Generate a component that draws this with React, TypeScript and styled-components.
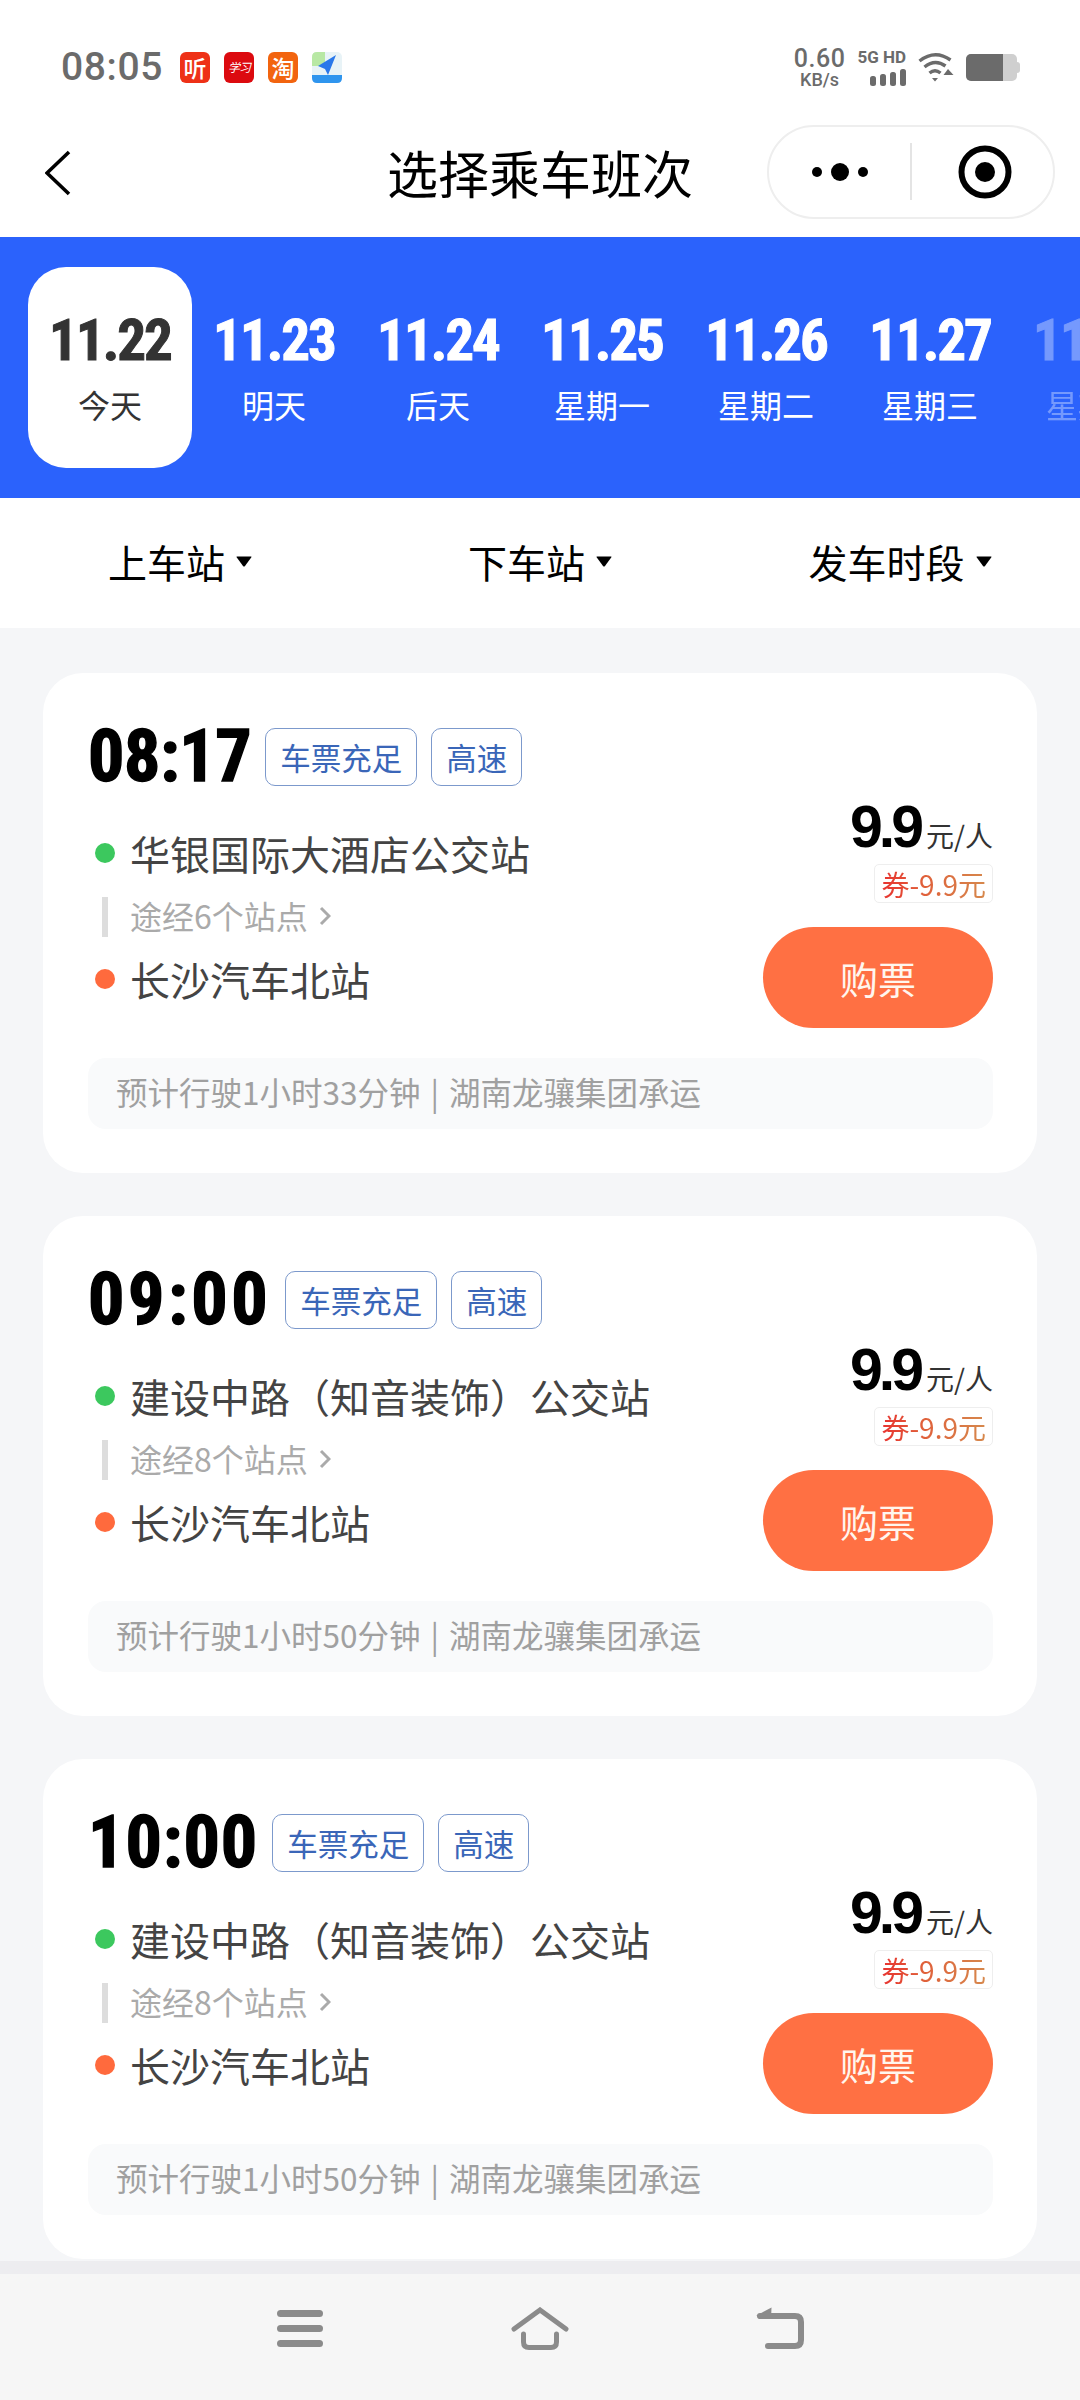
import React from 'react'
import styled, {createGlobalStyle} from 'styled-components'

const CJK='"Noto Sans CJK SC","Noto Sans",sans-serif'
const DIGITS='"Liberation Sans Narrow","Roboto Condensed",Roboto,sans-serif'

const GlobalStyle=createGlobalStyle`
html,body{
    margin:0;
    padding:0;
    background:#fff;
}
*{box-sizing:border-box;}
`

interface ITrip{
    time:string;
    spacing:number;
    from:string;
    via:number;
    duration:string;
}

// the digits of the reference are proportional, spacing makes up for it per time
const trips:ITrip[]=[
    {time:'08:17',spacing:-0.4,from:'华银国际大酒店公交站',via:6,duration:'1小时33分钟'},
    {time:'09:00',spacing:3.6,from:'建设中路（知音装饰）公交站',via:8,duration:'1小时50分钟'},
    {time:'10:00',spacing:1,from:'建设中路（知音装饰）公交站',via:8,duration:'1小时50分钟'},
]

const dates=[
    {day:'11.22',label:'今天'},
    {day:'11.23',label:'明天'},
    {day:'11.24',label:'后天'},
    {day:'11.25',label:'星期一'},
    {day:'11.26',label:'星期二'},
    {day:'11.27',label:'星期三'},
    {day:'11.28',label:'星期四'},
]

const Filter:React.FC<{label:string}>=({label})=>(
    <FilterItem>
        {label}
        <svg width="16" height="11" viewBox="0 0 16 11"><path d="M1 0.5H15Q16 0.5 15.2 1.6L9 10Q8 11 7 10L0.8 1.6Q0 0.5 1 0.5Z" fill="#000"/></svg>
    </FilterItem>
)

const TripCard:React.FC<{trip:ITrip}>=({trip})=>(
    <Card>
        <CardMain>
            <div>
                <CardHead>
                    <DepartTime $spacing={trip.spacing}>{trip.time}</DepartTime>
                    <Tag>车票充足</Tag>
                    <Tag>高速</Tag>
                </CardHead>
                <Stop>
                    <Dot $color="#3cc85e"/>
                    {trip.from}
                </Stop>
                <Via>
                    <ViaBar/>
                    <ViaText>途经{trip.via}个站点</ViaText>
                    <svg width="12" height="20" viewBox="0 0 12 20"><path d="M2 2L10 10L2 18" fill="none" stroke="#aaa" strokeWidth="3"/></svg>
                </Via>
                <Stop>
                    <Dot $color="#ff6a3d"/>
                    长沙汽车北站
                </Stop>
            </div>
            <PriceColumn>
                <PriceLine><Price>9.9</Price><PriceUnit>元/人</PriceUnit></PriceLine>
                <Coupon><CouponText>券-9.9元</CouponText></Coupon>
                <BuyButton>购票</BuyButton>
            </PriceColumn>
        </CardMain>
        <CardFooter>预计行驶{trip.duration} | 湖南龙骧集团承运</CardFooter>
    </Card>
)

export default function App():React.ReactElement{
    return (
        <Page>
            <GlobalStyle/>
            <StatusBar>
                <StatusLeft>
                    <Clock>08:05</Clock>
                    <AppIcon $bg="#ee3117">听</AppIcon>
                    <AppIcon $bg="#dc0a0f" $small>学习</AppIcon>
                    <AppIcon $bg="#f2640f">淘</AppIcon>
                    <svg width="30" height="31" viewBox="0 0 30 31">
                        <rect width="30" height="31" rx="5" fill="#e8f3f7"/>
                        <path d="M0 5Q0 0 5 0H13V14H0Z" fill="#b8e8a4"/>
                        <path d="M0 23H30V26Q30 31 25 31H5Q0 31 0 26Z" fill="#2f95ee"/>
                        <path d="M24 3L6 14L13 17L16 23Z" fill="#2a78ea"/>
                    </svg>
                </StatusLeft>
                <StatusRight>
                    <NetSpeed>
                        <SpeedValue>0.60</SpeedValue>
                        <SpeedUnit>KB/s</SpeedUnit>
                    </NetSpeed>
                    <Signal>
                        <SignalLabel>5G HD</SignalLabel>
                        <svg width="36" height="17" viewBox="0 0 36 17" fill="#6b6b6b">
                            <rect x="0" y="7" width="6" height="10" rx="2.5"/>
                            <rect x="10" y="5" width="6" height="12" rx="2.5"/>
                            <rect x="20" y="3" width="6" height="14" rx="2.5"/>
                            <rect x="30" y="0" width="6" height="17" rx="2.5"/>
                        </svg>
                    </Signal>
                    <svg width="36" height="30" viewBox="0 0 36 30" fill="none" stroke="#6b6b6b" strokeWidth="3.4">
                        <path d="M1.5 9Q17 -3 32.5 8"/>
                        <path d="M6.5 15Q17 6.500 27.500 14"/>
                        <path d="M11.500 21Q17 16.500 22.500 21"/>
                        <path d="M14 26H20L17 29.500Z" fill="#6b6b6b" stroke="none"/>
                        <path d="M30 17L35.500 23H25.500Z" fill="#6b6b6b" stroke="none"/>
                    </svg>
                    <Battery>
                        <BatteryFill/>
                        <BatteryTip/>
                    </Battery>
                </StatusRight>
            </StatusBar>

            <NavBar>
                <BackIcon width="26" height="46" viewBox="0 0 26 46"><path d="M24 2L2 23L24 44" fill="none" stroke="#000" strokeWidth="3.6"/></BackIcon>
                <Title>选择乘车班次</Title>
                <Capsule>
                    <CapsuleHalf>
                        <svg width="56" height="20" viewBox="0 0 56 20" fill="#000">
                            <circle cx="5" cy="10" r="5"/>
                            <circle cx="28" cy="10" r="9"/>
                            <circle cx="51" cy="10" r="5"/>
                        </svg>
                    </CapsuleHalf>
                    <CapsuleDivider/>
                    <CapsuleHalf>
                        <svg width="58" height="54" viewBox="0 0 58 54">
                            <circle cx="31" cy="27" r="23.500" fill="none" stroke="#000" strokeWidth="6"/>
                            <circle cx="31" cy="27" r="10" fill="#000"/>
                        </svg>
                    </CapsuleHalf>
                </Capsule>
            </NavBar>

            <DateStrip>
                {dates.map((d,i)=>(
                    <DateCell key={d.day} $active={i===0} $faded={i===6}>
                        <DateNumber>{d.day}</DateNumber>
                        <DateLabel>{d.label}</DateLabel>
                    </DateCell>
                ))}
            </DateStrip>

            <FilterBar>
                <Filter label="上车站"/>
                <Filter label="下车站"/>
                <Filter label="发车时段"/>
            </FilterBar>

            <TripList>
                {trips.map(t=><TripCard key={t.time} trip={t}/>)}
            </TripList>

            <SystemNav>
                <svg width="46" height="37" viewBox="0 0 46 37" fill="#8b8b8b">
                    <rect x="0" y="0" width="46" height="7" rx="3.500"/>
                    <rect x="0" y="15" width="46" height="7" rx="3.500"/>
                    <rect x="0" y="30" width="46" height="7" rx="3.500"/>
                </svg>
                <svg width="58" height="43" viewBox="0 0 58 43" fill="none" stroke="#8b8b8b" strokeWidth="5" strokeLinecap="round">
                    <path d="M3 22L29 3L55 22"/>
                    <path d="M12.500 27V35Q12.500 40.500 18 40.500H40Q45.500 40.500 45.500 35V27"/>
                </svg>
                <svg width="48" height="42" viewBox="0 0 48 42" fill="none" stroke="#8b8b8b" strokeWidth="6" strokeLinecap="round">
                    <path d="M0.500 8.500L15.500 0.500L15 12H3Z" fill="#8b8b8b" stroke="none"/>
                    <path d="M4 9H39Q45 9 45 15V33Q45 39 39 39H12"/>
                </svg>
            </SystemNav>
        </Page>
    )
}

const Page=styled.div`
width:1080px;
height:2400px;
display:flex;
flex-direction:column;
overflow:hidden;
background:#fff;
font-family:${CJK};
`

const StatusBar=styled.div`
height:120px;
padding:14px 60px 0 61px;
display:flex;
justify-content:space-between;
align-items:center;
flex-shrink:0;
`

const StatusLeft=styled.div`
display:flex;
align-items:center;
gap:14px;
`

const Clock=styled.div`
font-family:Roboto,sans-serif;
font-size:39px;
font-weight:500;
color:#6b6b6b;
letter-spacing:.6px;
margin-right:3px;
`

const AppIcon=styled.div<{$bg:string;$small?:boolean}>`
width:30px;
height:31px;
border-radius:6px;
background:${({$bg})=>$bg};
color:#fff;
display:flex;
align-items:center;
justify-content:center;
line-height:1;
${({$small})=>$small?'font-size:12px;font-style:italic;letter-spacing:-1px;':'font-size:23px;font-weight:500;'}
`

const StatusRight=styled.div`
display:flex;
align-items:center;
gap:12px;
`

const NetSpeed=styled.div`
display:flex;
flex-direction:column;
align-items:center;
color:#6b6b6b;
font-family:Roboto,sans-serif;
`

const SpeedValue=styled.div`
font-size:25px;
font-weight:500;
line-height:25px;
letter-spacing:.5px;
`

const SpeedUnit=styled.div`
font-size:18px;
line-height:18px;
font-weight:500;
`

const Signal=styled.div`
display:flex;
flex-direction:column;
align-items:flex-end;
gap:3px;
`

const SignalLabel=styled.div`
font-family:Roboto,sans-serif;
font-size:17px;
line-height:17px;
font-weight:700;
color:#6b6b6b;
white-space:nowrap;
`

const Battery=styled.div`
position:relative;
width:51px;
height:27px;
margin-left:0;
margin-right:3px;
border-radius:5px;
background:#cfcfcf;
overflow:visible;
`

const BatteryFill=styled.div`
width:37px;
height:100%;
background:#6b6b6b;
border-radius:5px 0 0 5px;
`

const BatteryTip=styled.div`
position:absolute;
right:-3px;
top:8px;
width:3px;
height:11px;
border-radius:0 3px 3px 0;
background:#cfcfcf;
`

const NavBar=styled.div`
height:117px;
padding:0 25px;
display:grid;
grid-template-columns:1fr auto 1fr;
align-items:center;
flex-shrink:0;
`

const BackIcon=styled.svg`
margin:-12px 0 0 20px;
`

const Title=styled.div`
font-size:51px;
line-height:60px;
color:#000;
margin-top:-14px;
`

const Capsule=styled.div`
justify-self:end;
width:288px;
height:94px;
margin-top:-14px;
border:2px solid #eeeeee;
border-radius:47px;
display:flex;
align-items:center;
`

const CapsuleHalf=styled.div`
flex:1;
display:flex;
align-items:center;
justify-content:center;
`

const CapsuleDivider=styled.div`
width:2px;
height:57px;
background:#e4e4e4;
`

const DateStrip=styled.div`
height:261px;
padding:30px 0 0 28px;
background:#2b62fc;
display:flex;
overflow:hidden;
flex-shrink:0;
`

const DateCell=styled.div<{$active:boolean;$faded:boolean}>`
width:164px;
height:201px;
flex-shrink:0;
padding-top:44px;
border-radius:38px;
text-align:center;
color:${({$active})=>$active?'#333':'#fff'};
background:${({$active})=>$active?'#fff':'transparent'};
opacity:${({$faded})=>$faded?0.35:1};
`

const DateNumber=styled.div`
font-family:${DIGITS};
font-size:57px;
font-weight:700;
line-height:60px;
letter-spacing:-2px;
-webkit-text-stroke:1px currentColor;
`

const DateLabel=styled.div`
font-size:32px;
line-height:40px;
margin-top:13px;
white-space:nowrap;
`

const FilterBar=styled.div`
height:130px;
padding-bottom:4px;
display:grid;
grid-template-columns:repeat(3,360px);
align-items:center;
flex-shrink:0;
`

const FilterItem=styled.div`
display:flex;
align-items:center;
justify-content:center;
gap:11px;
font-size:39px;
color:#000;
white-space:nowrap;
`

const TripList=styled.div`
flex:1;
min-height:0;
padding:45px 43px 0;
background:#f5f6f8;
display:flex;
flex-direction:column;
gap:43px;
overflow:hidden;
`

const Card=styled.div`
height:500px;
flex-shrink:0;
padding:55px 44px 43px 45px;
border-radius:40px;
background:#fff;
`

const CardMain=styled.div`
display:flex;
justify-content:space-between;
height:301px;
`

const CardHead=styled.div`
display:flex;
align-items:center;
gap:14px;
height:58px;
margin-bottom:40px;
`

const DepartTime=styled.div<{$spacing:number}>`
font-family:${DIGITS};
font-size:72px;
font-weight:700;
letter-spacing:${({$spacing})=>$spacing}px;
-webkit-text-stroke:1.4px currentColor;
color:#000;
line-height:58px;
`

const Tag=styled.div`
height:58px;
padding:0 14px;
display:flex;
align-items:center;
border:1.500px solid #7c99cc;
border-radius:10px;
font-size:30.500px;
color:#3a66b8;
white-space:nowrap;
`

const Stop=styled.div`
height:54px;
display:flex;
align-items:center;
padding-left:7px;
gap:15px;
font-size:40px;
color:#444;
white-space:nowrap;
`

const Dot=styled.span<{$color:string}>`
width:20px;
height:20px;
border-radius:50%;
background:${({$color})=>$color};
flex-shrink:0;
`

const Via=styled.div`
height:40px;
margin:17px 0 15px;
padding-left:14px;
display:flex;
align-items:center;
font-size:32px;
color:#aaaaaa;
svg{margin-left:11px;margin-top:-2px;}
`

const ViaText=styled.span`
margin-top:-5px;
`

const ViaBar=styled.span`
width:6px;
height:40px;
margin-right:22px;
background:#dddddd;
`

const PriceColumn=styled.div`
display:flex;
flex-direction:column;
align-items:flex-end;
padding-top:73px;
`

const PriceLine=styled.div`
display:flex;
align-items:baseline;
height:52px;
line-height:52px;
`

const Price=styled.span`
font-family:"Liberation Sans",Arial,sans-serif;
font-size:59px;
font-weight:700;
letter-spacing:-4px;
color:#000;
margin-right:6px;
`

const PriceUnit=styled.span`
font-size:28px;
color:#333;
`

const Coupon=styled.div`
height:39px;
margin-top:11px;
padding:0 6px;
display:flex;
align-items:center;
border:1px solid #eeeeee;
border-radius:5px;
`

const CouponText=styled.span`
font-size:28px;
line-height:36px;
white-space:nowrap;
background:linear-gradient(90deg,#e8322f 0%,#e0603a 40%,#d6884c 100%);
-webkit-background-clip:text;
background-clip:text;
color:transparent;
`

const BuyButton=styled.div`
width:230px;
height:101px;
margin-top:24px;
border-radius:51px;
background:#ff7043;
color:#fff6ee;
font-size:38px;
display:flex;
align-items:center;
justify-content:center;
`

const CardFooter=styled.div`
height:71px;
margin-top:29px;
padding:0 0 6px 28px;
display:flex;
align-items:center;
border-radius:18px;
background:#f9fafb;
font-size:31.500px;
word-spacing:3px;
color:#a0a0a0;
white-space:nowrap;
`

const SystemNav=styled.div`
height:139px;
border-top:13px solid #ededf0;
background:#f6f6f6;
display:grid;
grid-template-columns:repeat(3,240px);
justify-content:center;
justify-items:center;
align-items:center;
flex-shrink:0;
padding-bottom:18px;
`
